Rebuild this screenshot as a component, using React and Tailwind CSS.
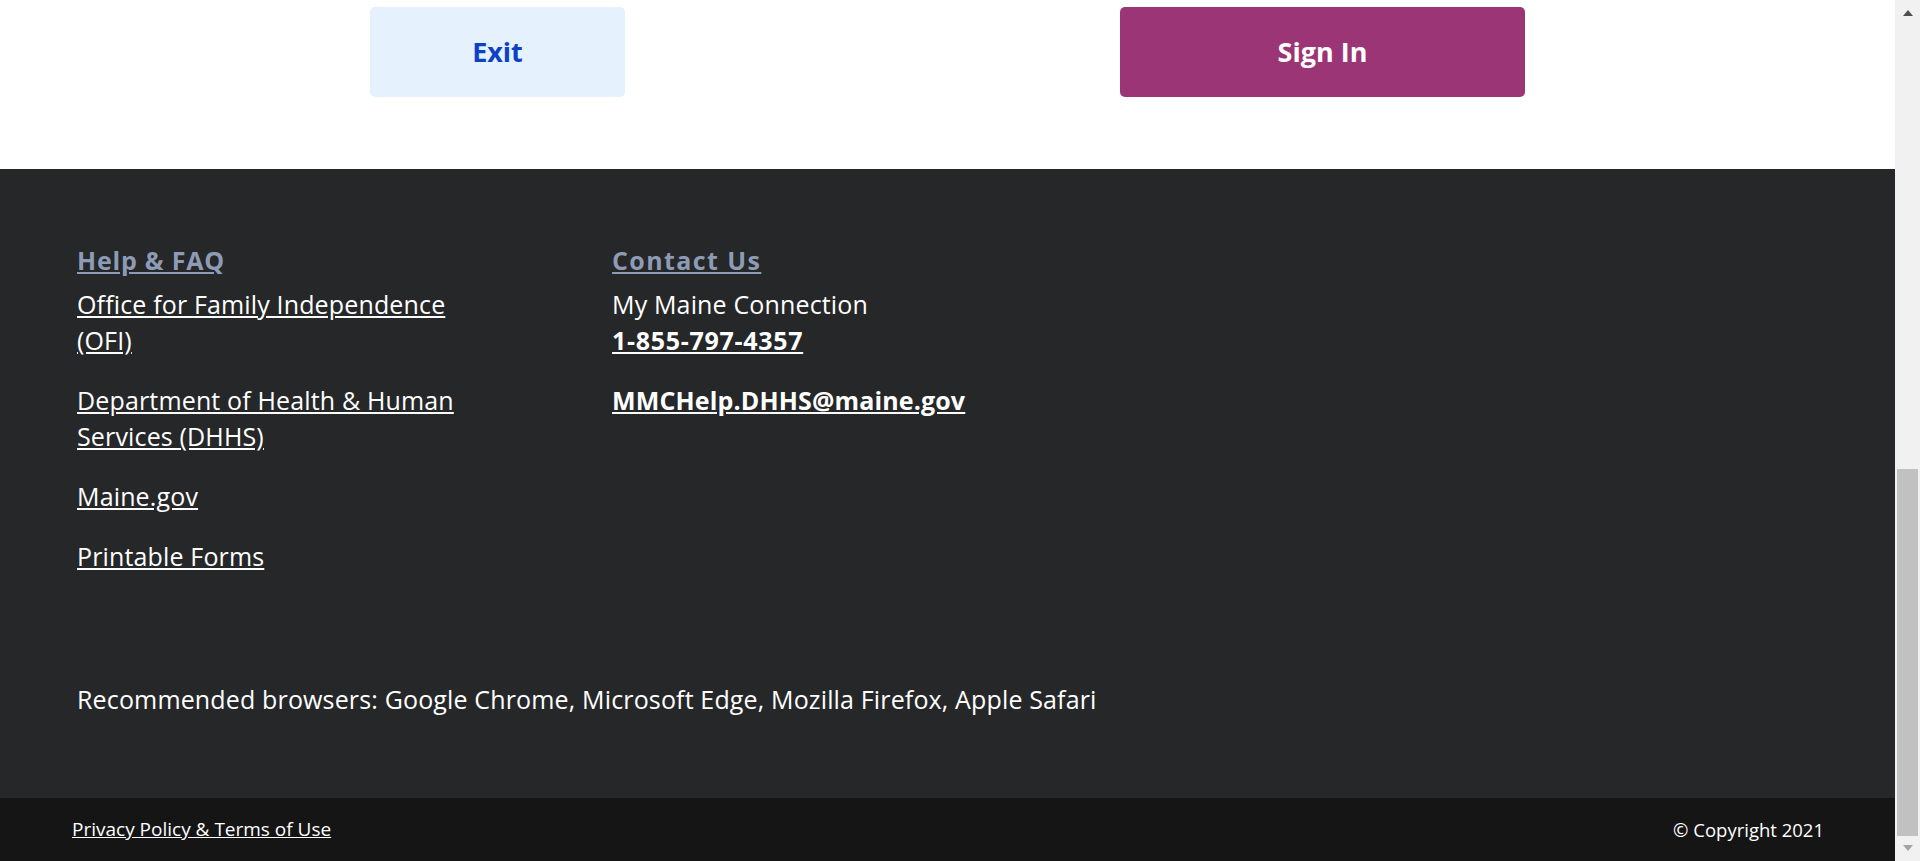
import React from 'react';

const helpLinks = [
  'Office for Family Independence (OFI)',
  'Department of Health & Human Services (DHHS)',
  'Maine.gov',
  'Printable Forms',
];

function Scrollbar() {
  return (
    <div className="w-[25px] shrink-0 bg-[#f1f1f1] flex flex-col">
      <div className="h-[25px] flex items-start justify-center pt-[10px] pl-[1px]">
        <div className="w-0 h-0 border-x-[5px] border-x-transparent border-b-[6px] border-b-[#505050]" />
      </div>
      <div className="flex-1" />
      <div className="h-[367px] ml-[2px] mr-[2px] bg-[#c1c1c1]" />
      <div className="h-[25px] flex items-start justify-center pt-[9px] pl-[1px]">
        <div className="w-0 h-0 border-x-[5px] border-x-transparent border-t-[6px] border-t-[#a3a3a3]" />
      </div>
    </div>
  );
}

export default function App() {
  return (
    <div className="h-[861px] w-full flex overflow-hidden bg-white" style={{ fontFamily: '"Open Sans", "Liberation Sans", sans-serif' }}>
      <div className="flex-1 flex flex-col min-w-0">
        {/* Buttons */}
        <div className="h-[169px] shrink-0 flex items-start pt-[7px] pl-[370px]">
          <button className="w-[255px] h-[90px] rounded-[5px] bg-[#e5f1fd] text-[#0b42c6] text-[27px] font-bold">
            Exit
          </button>
          <button className="ml-[495px] w-[405px] h-[90px] rounded-[5px] bg-[#9c3575] text-white text-[27px] font-bold">
            Sign In
          </button>
        </div>

        {/* Footer */}
        <footer className="flex-1 bg-[#262729] text-white text-[25px] leading-[36px] tracking-[0.15px] pl-[77px] pt-[73px] flex flex-col">
          <div className="flex">
            <div className="w-[535px]">
              <a href="#" className="block font-bold text-[#8d9bb5] underline tracking-[0.8px] mb-2">Help &amp; FAQ</a>
              <ul className="max-w-[400px] flex flex-col gap-6">
                {helpLinks.map((l) => (
                  <li key={l}>
                    <a href="#" className="underline underline-offset-2">{l}</a>
                  </li>
                ))}
              </ul>
            </div>
            <div>
              <a href="#" className="block font-bold text-[#8d9bb5] underline tracking-[1.4px] mb-2">Contact Us</a>
              <p>My Maine Connection</p>
              <a href="#" className="block font-bold underline tracking-[0.7px]">1-855-797-4357</a>
              <a href="#" className="block font-bold underline mt-6">MMCHelp.DHHS@maine.gov</a>
            </div>
          </div>
          <p className="mt-[107px]">
            Recommended browsers: Google Chrome, Microsoft Edge, Mozilla Firefox, Apple Safari
          </p>
        </footer>

        {/* Bottom bar */}
        <div className="h-[63px] shrink-0 bg-[#151515] text-white text-[19px] flex items-center justify-between pl-[72px] pr-[71px]">
          <a href="#" className="underline">Privacy Policy &amp; Terms of Use</a>
          <span className="text-[18.5px]">© Copyright 2021</span>
        </div>
      </div>
      <Scrollbar />
    </div>
  );
}
